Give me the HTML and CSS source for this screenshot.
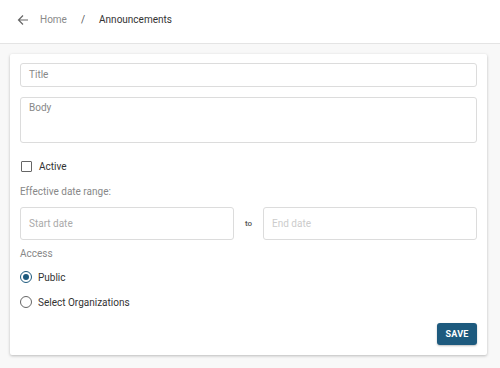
FILE: index.html
```html
<!DOCTYPE html>
<html lang="en">
<head>
    <meta charset="UTF-8">
    <meta name="viewport" content="width=device-width, initial-scale=1.0">
    <title>Announcements</title>
    <link rel="stylesheet" href="styles.css">
</head>
<body>
    <header class="topbar">
        <svg class="back" width="12" height="12" viewBox="0 0 12 12">
            <path d="M11 6H1.5M6 1.5L1.5 6L6 10.5" fill="none" stroke="#666" stroke-width="1.2"/>
        </svg>
        <span class="crumb">Home</span>
        <span class="sep">/</span>
        <span class="current">Announcements</span>
    </header>

    <main class="page">
        <form class="card">
            <div class="field title">Title</div>
            <div class="field body">Body</div>

            <label class="check-row">
                <span class="checkbox"></span>
                <span>Active</span>
            </label>

            <div class="label date-label">Effective date range:</div>
            <div class="date-row">
                <div class="field date start">Start date</div>
                <span class="to">to</span>
                <div class="field date end">End date</div>
            </div>

            <div class="label access-label">Access</div>
            <label class="radio-row first">
                <span class="radio checked"></span>
                <span>Public</span>
            </label>
            <label class="radio-row">
                <span class="radio"></span>
                <span>Select Organizations</span>
            </label>

            <div class="actions">
                <button type="button" class="save">SAVE</button>
            </div>
        </form>
    </main>
</body>
</html>
```

FILE: styles.css
```css
* {
    margin: 0;
    padding: 0;
    box-sizing: border-box;
}

body {
    font-family: Roboto, "Liberation Sans", sans-serif;
    font-size: 10px;
    color: #333;
    background: #f8f8f8;
    width: 500px;
    height: 368px;
    overflow: hidden;
}

.topbar {
    height: 44px;
    background: #fff;
    border-bottom: 1px solid #e4e4e4;
    display: flex;
    align-items: center;
    padding: 0 0 4px 17px;
}

.back {
    margin-right: 11px;
}

.crumb {
    color: #8a8a8a;
}

.sep {
    color: #555;
    margin: 0 14px 0 14px;
}

.current {
    color: #333;
}

.page {
    padding: 10px 13px 0 10px;
}

.card {
    background: #fff;
    border-radius: 2px;
    box-shadow: 0 1px 3px rgba(0, 0, 0, 0.25);
    padding: 9px 10px 10px 10px;
    display: flex;
    flex-direction: column;
}

.field {
    border: 1px solid #dcdcdc;
    border-radius: 3px;
    color: #888;
    padding: 0 8px;
}

.title {
    height: 24px;
    line-height: 22px;
}

.body {
    height: 46px;
    margin-top: 10px;
    padding-top: 4px;
}

.check-row {
    display: flex;
    align-items: center;
    height: 14px;
    margin-top: 16px;
}

.checkbox {
    width: 11px;
    height: 11px;
    border: 1.5px solid #666;
    border-radius: 1px;
    margin: 0 7px 0 1px;
}

.label {
    color: #888;
}

.date-label {
    margin-top: 13px;
}

.date-row {
    display: flex;
    align-items: center;
    margin-top: 10px;
}

.date {
    flex: 1;
    height: 33px;
    line-height: 31px;
}

.start {
    color: #aaa;
}

.end {
    color: #ccc;
}

.to {
    font-size: 8px;
    font-weight: 500;
    color: #555;
    width: 29px;
    text-align: center;
}

.access-label {
    margin-top: 8px;
}

.radio-row {
    display: flex;
    align-items: center;
    height: 14px;
    margin-top: 11px;
}

.radio-row.first {
    margin-top: 11px;
}

.radio {
    width: 12px;
    height: 12px;
    border: 1.5px solid #666;
    border-radius: 50%;
    margin-right: 6px;
    display: flex;
    align-items: center;
    justify-content: center;
}

.radio.checked {
    border-color: #1d5a7e;
}

.radio.checked::after {
    content: "";
    width: 6px;
    height: 6px;
    border-radius: 50%;
    background: #1d5a7e;
}

.actions {
    display: flex;
    justify-content: flex-end;
    margin-top: 14px;
}

.save {
    width: 40px;
    height: 22px;
    border: none;
    border-radius: 3px;
    background: #1d5a7e;
    color: #fff;
    font-family: Roboto, "Liberation Sans", sans-serif;
    font-size: 9px;
    font-weight: 700;
    letter-spacing: 0.2px;
    box-shadow: 0 1px 2px rgba(0, 0, 0, 0.25);
}
```
